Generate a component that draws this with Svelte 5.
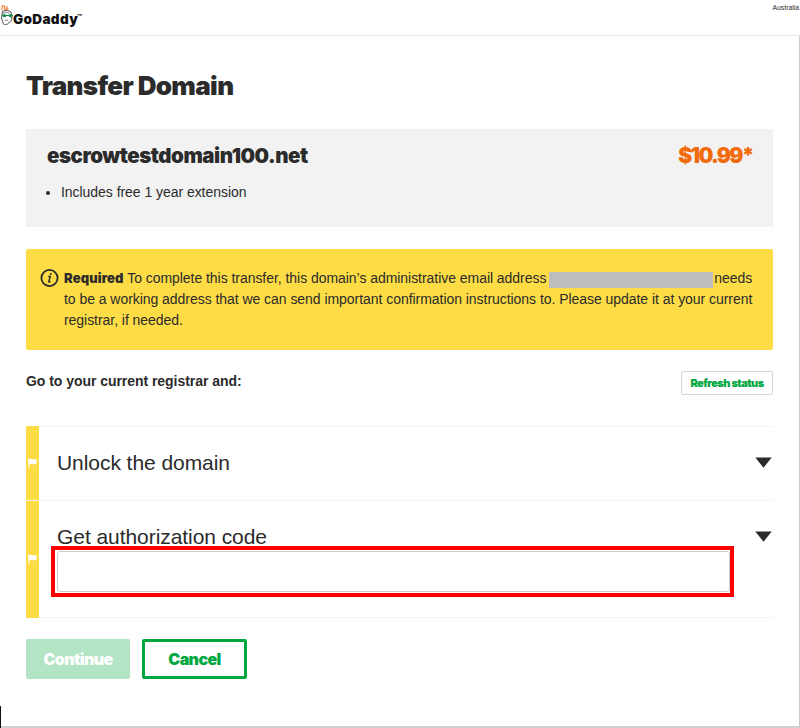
<script>
  const steps = [
    { title: 'Unlock the domain', field: false },
    { title: 'Get authorization code', field: true }
  ];
  let code = $state('');
</script>

<div class="page">
  <header>
    <div class="brand">
      <svg class="mascot" width="14" height="24" viewBox="0 0 14 24" fill="none">
        <path d="M2.2 4.500 1.800 9M4.500 4.500 4.800 9M7.200 5 6.300 9.500M1.800 5h2M5.500 8.500 8.500 8" stroke="#f28b4a" stroke-width="1.300" />
        <path d="M2.500 10 1.500 17l2 6 1 1 3-1 4-3.500.5-4-1-4.500-3.500-1.500z" fill="#fff" stroke="#555" stroke-width="1" />
        <path d="M2.500 12.500q4-3 7 0M5 19.500l3-.5" stroke="#666" stroke-width=".8" />
        <path d="M2 14.500h11" stroke="#13914c" stroke-width="1.200" />
        <circle cx="4.500" cy="14.700" r="1.600" fill="#168b4c" />
        <circle cx="10.500" cy="14.700" r="1.600" fill="#168b4c" />
      </svg>
      <span class="word">GoDaddy</span><span class="tm">™</span>
    </div>
    <span class="region">Australia</span>
  </header>

  <main>
    <h1>Transfer Domain</h1>

    <section class="summary">
      <div class="row">
        <h2>escrowtestdomain100.net</h2>
        <span class="price">$10.99*</span>
      </div>
      <ul><li>Includes free 1 year extension</li></ul>
    </section>

    <section class="alert">
      <svg width="20" height="20" viewBox="0 0 20 20" fill="none" stroke="#2b2b2b">
        <circle cx="9.500" cy="10" r="8.100" stroke-width="1.800" />
        <path d="M8.300 8.400h1.900l-1.400 5.300h1.700" stroke-width="1.500" />
        <circle cx="10.700" cy="6" r=".6" fill="#2b2b2b" />
      </svg>
      <p>
        <span class="l1"><strong>Required</strong> To complete this transfer, this domain’s administrative email address <i class="redacted"></i>needs</span>
        <span>to be a working address that we can send important confirmation instructions to. Please update it at your current</span>
        <span>registrar, if needed.</span>
      </p>
    </section>

    <div class="prompt">
      <b>Go to your current registrar and:</b>
      <button class="refresh">Refresh status</button>
    </div>

    <div class="steps">
      {#each steps as step}
        <div class="step" class:tall={step.field}>
          <div class="strip">
            <svg width="9" height="10" viewBox="0 0 9 10" fill="#fff">
              <path d="M.300 .500h1.200v9H.300zM1.500 1.300C3 .3 4 2.200 8.500 1v4.900C5 7.200 4 5.300 1.500 6.300z" />
            </svg>
          </div>
          <div class="body">
            <div class="head">
              <h3>{step.title}</h3>
              <svg width="18" height="11" viewBox="0 0 18 11"><path d="M.3.500h16.400L8.500 10.700z" fill="#2b2b2b" /></svg>
            </div>
            {#if step.field}
              <div class="highlight"><input bind:value={code} aria-label={step.title} /></div>
            {/if}
          </div>
        </div>
      {/each}
    </div>

    <div class="actions">
      <button class="go" disabled>Continue</button>
      <button class="cancel">Cancel</button>
    </div>
  </main>
  <i class="caret"></i>
</div>

<style>
  :global(body) { margin: 0; background: #fff; }
  .page { position: relative; box-sizing: border-box; width: 800px; height: 728px; overflow: hidden; display: flex; flex-direction: column; font: 14px/21px "Liberation Sans", Arial, sans-serif; letter-spacing: -0.045px; color: #2b2b2b; }
  h1, h2, h3, p, ul { margin: 0; padding: 0; }
  header { box-sizing: border-box; height: 36px; flex: none; display: flex; justify-content: space-between; border-bottom: 1px solid #e8e8e8; }
  .brand { display: flex; align-items: flex-start; color: #111; font-family: Inter, sans-serif; }
  .mascot { margin-top: 1px; }
  .word { font-size: 13.5px; line-height: 20px; font-weight: 900; letter-spacing: 0.4px; margin: 9px 0 0 -1px; }
  .word { letter-spacing: 0.35px; }
  .tm { font-size: 8px; line-height: 8px; font-weight: 700; margin: 13px 0 0 -1px; }
  .region { font-size: 6.8px; line-height: 8px; margin: 4px 1px 0 0; letter-spacing: 0; }
  main { box-sizing: border-box; height: 692px; padding: 0 26px; border-right: 1px solid #ccc; border-bottom: 2px solid #d2d2d2; }
  h1 { font: 900 26px/32px Inter, sans-serif; letter-spacing: -0.65px; padding-top: 34px; }
  h1, h2, .price, strong, button { white-space: nowrap; }
  .summary { box-sizing: border-box; height: 98px; margin-top: 27px; padding: 14px 21px 0; background: #f2f2f2; }
  .row { display: flex; justify-content: space-between; }
  h2 { font: 900 20.5px/26px Inter, sans-serif; letter-spacing: -0.48px; }
  .price { font: 900 21px/26px Inter, sans-serif; letter-spacing: -1.65px; color: #f26a0a; margin-right: -1px; }
  ul { margin-top: 13px; padding-left: 14px; }
  .alert { box-sizing: border-box; height: 101px; margin-top: 22px; padding: 19px 14px 0; display: flex; background: #fedc45; border-radius: 2px; }
  .alert svg { flex: none; }
  .alert p { margin-left: 4px; }
  .alert span { display: block; white-space: nowrap; }
  strong { font: 900 13px/20px Inter, sans-serif; letter-spacing: 0.12px; }
  .redacted { display: inline-block; width: 164px; height: 16px; background: #bdbdbd; vertical-align: -5px; margin: 0 1px 0 -1px; }
  .l1 { height: 21px; }
  .prompt { display: flex; justify-content: space-between; margin-top: 21px; height: 55px; }
  .refresh { box-sizing: border-box; width: 92px; height: 24px; padding: 0; border: 1px solid #d6d6d6; border-radius: 2px; background: #fff; color: #00a63f; font: 900 11px/20px Inter, sans-serif; letter-spacing: -0.55px; }
  .steps { border-bottom: 1px solid #f4f4f4; }
  .step { box-sizing: border-box; height: 74px; display: flex; border-top: 1px solid #f4f4f4; }
  .tall { height: 117px; }
  .strip { width: 13px; background: #fedc45; display: flex; align-items: center; justify-content: center; }
  .strip svg { margin-top: -1px; }
  .step:first-child .strip { margin-top: -1px; }
  .tall .strip { margin-bottom: -1px; }
  .body { flex: 1; padding: 23px 0 0 18px; }
  .head { display: flex; justify-content: space-between; }
  .head svg { margin: 7px 0 0 0; }
  h3 { font-size: 21px; line-height: 26px; font-weight: 400; letter-spacing: -0.06px; }
  .highlight { box-sizing: border-box; width: 683px; height: 51px; margin: -4px 0 0 -6px; border: 4px solid red; padding: 1px 0 0 2px; }
  .highlight input { box-sizing: border-box; display: block; width: 673px; height: 41px; border: 1px solid #ccc; border-radius: 3px; outline: 0; padding: 0 8px; background: #fff; }
  .actions { display: flex; gap: 12px; margin-top: 21px; }
  .actions button { box-sizing: border-box; width: 104px; height: 40px; padding: 0; border: 0; border-radius: 2px; font: 900 16px/24px Inter, sans-serif; letter-spacing: -0.6px; }
  .actions .go { background: #b2e4c5; color: #fff; }
  .actions .cancel { width: 105px; border: 3px solid #00a63f; background: #fff; color: #00a63f; }
  .caret { position: absolute; left: 0; bottom: 0; width: 1px; height: 22px; background: #111; }
</style>
